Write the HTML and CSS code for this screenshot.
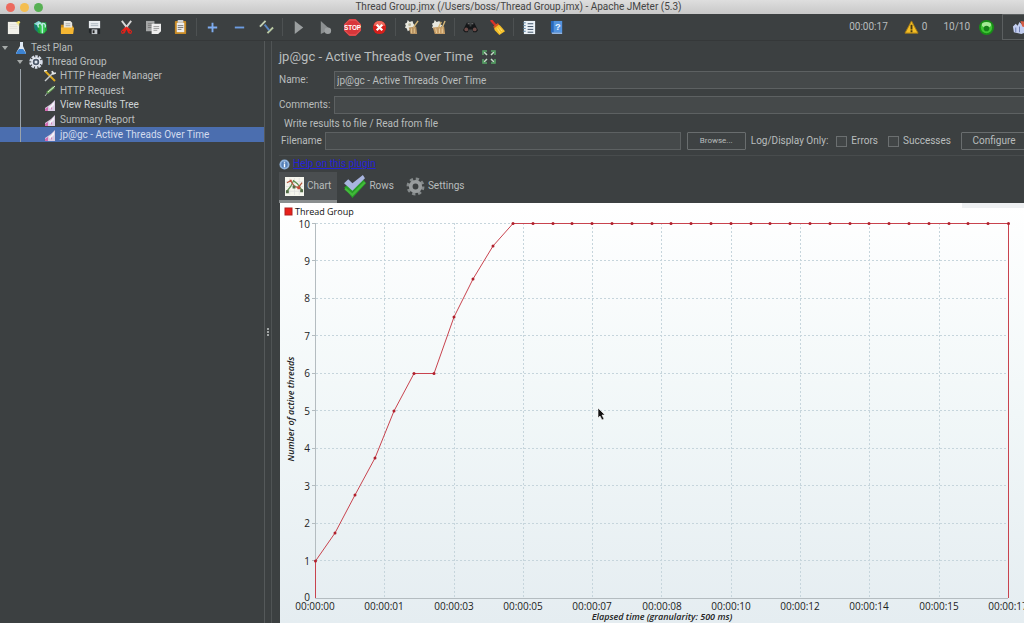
FILE: index.html
```html
<!DOCTYPE html>
<html lang="en">
<head>
  <meta charset="UTF-8" />
  <meta name="viewport" content="width=device-width, initial-scale=1.0" />
  <title>Thread Group.jmx - Apache JMeter (5.3)</title>
  <link rel="stylesheet" href="styles.css">
</head>
<body>
  <header class="titlebar">
    <div class="lights"><i class="red"></i><i class="yellow"></i><i class="green"></i></div>
    <div class="window-title">Thread Group.jmx (/Users/boss/Thread Group.jmx) - Apache JMeter (5.3)</div>
  </header>

  <nav class="toolbar">
    <div class="group">
      <button aria-label="New"><svg viewBox="0 0 16 16"><path d="M2 2h12v13H2z" fill="#f2f1ea"/><path d="M4 5h8M4 7h8M4 9h8" stroke="#d9d8d0" stroke-width=".6"/><path d="M10 2h4v5z" fill="#eee6a0"/><circle cx="13.500" cy="2.500" r="1.500" fill="#f3e26b"/></svg></button>
      <button aria-label="Templates"><svg viewBox="0 0 16 16"><path d="M1 4l5-3 4 2 4-1 1 9-4 4-5-1-4-4z" fill="#1fa03c"/><path d="M1 4l5-3 3 2-4 3z" fill="#8fd3e0"/><path d="M1 5l4 1v7l-3-3z" fill="#167a78"/><path d="M6 6l7-2v9l-5 1z" fill="#35c84f"/><path d="M10 3v11M6 8c-2-4 1-6 3-3 3-3 5 0 4 3" fill="none" stroke="#b5ebe0" stroke-width="1.500"/></svg></button>
      <button aria-label="Open"><svg viewBox="0 0 16 16"><path d="M1 5h5l1 1h7v8H1z" fill="#c98a18"/><path d="M4 1h7l2 2v6H4z" fill="#e8e6df"/><path d="M6 4h5M6 6h5" stroke="#aaa"/><path d="M1 8h14l-1 7H1z" fill="#f5b632"/></svg></button>
      <button aria-label="Save"><svg viewBox="0 0 16 16"><path d="M2 1h12v8H2z" fill="#e9edf0"/><path d="M4 4h8M4 6h8" stroke="#a9b4bd"/><path d="M2 9h12v6H4l-2-2z" fill="#23272a"/><path d="M5 10h6v5H5z" fill="#c7ccd0"/><path d="M6 11h2v3H6z" fill="#222"/></svg></button>
    </div>
    <div class="group cut">
      <button aria-label="Cut"><svg viewBox="0 0 16 16"><path d="M3 1l7 9M13 1L6 10" stroke="#d8d8d8" stroke-width="2"/><path d="M8 7l-3 2-3 3 1 3 3-1 2-4 2 4 3 1 1-3-3-3z" fill="#e32119"/><circle cx="4" cy="12.500" r=".8" fill="#3c4041"/><circle cx="12" cy="12.500" r=".8" fill="#3c4041"/></svg></button>
      <button aria-label="Copy"><svg viewBox="0 0 16 16"><path d="M0 1h9v11H0z" fill="#a5a7a7"/><path d="M2 4h5M2 6h5M2 8h4" stroke="#777"/><path d="M6 4h10v8l-3 3H6z" fill="#eee"/><path d="M8 7h6M8 9h6M8 11h4" stroke="#999"/></svg></button>
      <button aria-label="Paste"><svg viewBox="0 0 16 16"><rect x="2" y="1" width="12" height="14" rx="1" fill="#c98b25"/><path d="M4 3h8v10H4z" fill="#eee"/><path d="M5 0h6v3H5z" fill="#d2d2d2"/><path d="M5 6h6M5 8h6M5 10h4" stroke="#777"/></svg></button>
    </div>
    <span class="sep"></span>
    <div class="group">
      <button aria-label="Expand all"><svg viewBox="0 0 16 16"><path d="M8 3v10M3 8h10" stroke="#7eacf0" stroke-width="2"/></svg></button>
      <button aria-label="Collapse all"><svg viewBox="0 0 16 16"><path d="M3 8h10" stroke="#6d9ce2" stroke-width="2"/></svg></button>
      <button aria-label="Toggle"><svg viewBox="0 0 16 16"><path d="M1 7l6-6" stroke="#c4d0b4" stroke-width="2"/><path d="M9 14l6-6" stroke="#b9c9a4" stroke-width="2"/><path d="M6 5l5 6" stroke="#5a87c2" stroke-width="2"/></svg></button>
    </div>
    <span class="sep"></span>
    <div class="group">
      <button aria-label="Start"><svg viewBox="0 0 16 16"><path d="M4 1l9 7-9 7z" fill="#9b9fa0"/></svg></button>
      <button aria-label="Start no pauses"><svg viewBox="0 0 16 16"><path d="M3 1l10 9-10 5z" fill="#8c9091"/><circle cx="10.500" cy="11.500" r="3.500" fill="#9da1a2"/></svg></button>
      <button aria-label="Stop"><svg class="big" viewBox="0 0 16 16"><path d="M5 0h6l5 5v6l-5 5H5l-5-5V5z" fill="#d9363a"/><path d="M5 1h6l4 4v6l-4 4H5l-4-4V5z" fill="none" stroke="#ef8078" stroke-width=".5"/><text x="8" y="10.500" class="stop-text">STOP</text></svg></button>
      <button aria-label="Shutdown"><svg viewBox="0 0 16 16"><circle cx="8" cy="8" r="7" fill="#d61f1b"/><path d="M2 6a6 5 0 0 1 12 0z" fill="#ef6a5e"/><path d="M5 5l6 6M11 5l-6 6" stroke="#fff" stroke-width="2.400"/></svg></button>
    </div>
    <span class="sep"></span>
    <div class="group">
      <button aria-label="Clear"><svg viewBox="0 0 16 16"><path d="M1 4l2-1 1-3 2 2 3-1 1 3 2 2-2 2v3l-3-1-3 2-1-3-2-1 1-2z" fill="#e8e8df"/><circle cx="6" cy="5" r="1.500" fill="#b9b59a"/><path d="M5 8l8-1 1 8H7z" fill="#b99463"/><path d="M10 8l5-7" stroke="#d5b577" stroke-width="1.500"/><path d="M8 9v5M11 9v5" stroke="#e0c28d"/></svg></button>
      <button aria-label="Clear all"><svg viewBox="0 0 16 16"><path d="M1 4l2-1 1-3 2 2 3-1 1 3 2 2-2 2v3l-3-1-3 2-1-3-2-1 1-2z" fill="#e8e8df"/><path d="M2 8l12-1 1 8H4z" fill="#c79d66"/><path d="M8 8l3-6M12 8l3-7" stroke="#d5b577" stroke-width="1.500"/><path d="M5 9l1 5M9 9v5M12 9v5" stroke="#ead0a0"/></svg></button>
    </div>
    <span class="sep"></span>
    <div class="group">
      <button aria-label="Search"><svg viewBox="0 0 16 16"><path d="M4 3h3v4h2V3h3l4 8-2 2h-3l-1-3H6l-1 3H2l-2-2z" fill="#151719"/><circle cx="3.500" cy="10" r="2" fill="#6d4c49"/><circle cx="12.500" cy="10" r="2" fill="#6d4c49"/><path d="M5 4h2M9 4h2" stroke="#888"/></svg></button>
      <button aria-label="Clear search"><svg viewBox="0 0 16 16"><path d="M1 0l6 7" stroke="#d8322a" stroke-width="2.500"/><path d="M4 7l4-3 3 2 5 6-6 4-5-5z" fill="#f4bf28"/><path d="M4 8l5-4" stroke="#d45520" stroke-width="2"/><path d="M8 9l3 5M10 8l3 4" stroke="#ffe276"/></svg></button>
    </div>
    <span class="sep"></span>
    <div class="group">
      <button aria-label="Function helper"><svg viewBox="0 0 16 16"><path d="M2 1h12v14H2z" fill="#eaf1f7"/><path d="M6 4h6M6 7h6M6 10h6M6 13h6" stroke="#34495f"/><path d="M1 3h3M1 6h3M1 9h3M1 12h3" stroke="#577f9f"/></svg></button>
      <button aria-label="Help"><svg viewBox="0 0 16 16"><path d="M2 1h12v14H4l-2-2z" fill="#2869bd"/><path d="M5 1h9v12H5z" fill="#5393dd"/><path d="M3 14h11" stroke="#dfeaf5"/><text x="9.500" y="11" class="help-text">?</text></svg></button>
    </div>
    <div class="status">
      <span class="time">00:00:17</span>
      <svg viewBox="0 0 16 16"><path d="M8 1l7 13H1z" fill="#f4be24" stroke="#a77d16"/><path d="M8 5v5M8 11v2" stroke="#443811" stroke-width="2"/></svg>
      <span class="errors">0</span>
      <span class="threads">10/10</span>
      <svg viewBox="0 0 16 16"><circle cx="8" cy="8" r="8" fill="#188d17"/><circle cx="8" cy="8" r="6" fill="#3fc634"/><ellipse cx="8" cy="5" rx="5" ry="3" fill="#a4ea94"/><circle cx="8" cy="9" r="3" fill="#16801a"/></svg>
      <button class="plugins" aria-label="Plugins Manager"><svg viewBox="0 0 16 16"><path d="M1 7l3-3 2 2 2-4 3 3 4-1v9l-5 2-8-2z" fill="#c3cef0"/><path d="M9 1l6 1v6l-4-1z" fill="#d45b45"/><path d="M4 8v5M8 7v6" stroke="#6977ad"/></svg></button>
    </div>
  </nav>

  <div class="workspace">
    <aside class="tree">
      <div class="node root"><i class="arrow"></i><svg viewBox="0 0 12 12"><path d="M5 0h3v4l3 7q0 1-1 1H2q-1 0-1-1l4-7z" fill="#dfe9f4"/><path d="M4 7h4l3 4q0 1-1 1H2q-1 0-1-1z" fill="#3c83d2"/></svg>Test Plan</div>
      <div class="node thread"><i class="arrow"></i><svg viewBox="0 0 14 14"><circle cx="7" cy="7" r="5.500" fill="none" stroke="#d8deea" stroke-width="2.500" stroke-dasharray="2.500 1"/><circle cx="7" cy="7" r="4" fill="#4d5969" stroke="#edf1f8" stroke-width="1.500"/><circle cx="7" cy="7" r="1.500" fill="#dfe6f0"/></svg>Thread Group</div>
      <ul class="children">
        <li class="node"><svg viewBox="0 0 12 12"><path d="M1 1l10 10" stroke="#dda91f" stroke-width="2"/><path d="M1 11l9-9" stroke="#c7cccf" stroke-width="1.500"/><path d="M0 1l3-1M8 1l1 3 3-1" stroke="#e5e8e8" stroke-width="1.500" fill="none"/></svg>HTTP Header Manager</li>
        <li class="node"><svg viewBox="0 0 12 12"><path d="M1 11l3-4" stroke="#aeb3b3"/><path d="M3 8l7-6" stroke="#66a453" stroke-width="2.500"/><path d="M4 7l7-6" stroke="#e2ead9"/></svg>HTTP Request</li>
        <li class="node lit"><svg viewBox="0 0 12 12"><use href="#report"/></svg>View Results Tree</li>
        <li class="node"><svg viewBox="0 0 12 12"><use href="#report"/></svg>Summary Report</li>
        <li class="node selected"><svg viewBox="0 0 12 12"><use href="#report"/></svg>jp@gc - Active Threads Over Time</li>
      </ul>
    </aside>

    <div class="splitter"><i></i><i></i><i></i></div>

    <main class="panel">
      <h1>jp@gc - Active Threads Over Time
        <svg viewBox="0 0 14 14"><path d="M2 2l3 3M12 2L9 5M2 12l3-3M12 12L9 9" stroke="#c2dcc6" stroke-width="1.500"/><path d="M1 5V1h4M9 1h4v4M1 9v4h4M9 13h4V9" fill="none" stroke="#56a765" stroke-width="1.500"/></svg>
      </h1>
      <div class="fields">
        <div class="row">
          <label for="name">Name:</label>
          <input type="text" id="name" value="jp@gc - Active Threads Over Time">
        </div>
        <div class="row">
          <label for="comments">Comments:</label>
          <input type="text" id="comments">
        </div>
      </div>
      <section class="results">
        <div class="legend">Write results to file / Read from file</div>
        <div class="file-row">
          <label for="filename">Filename</label>
          <input type="text" id="filename">
          <button class="browse">Browse...</button>
          <span class="only">Log/Display Only:</span>
          <label class="check"><input type="checkbox">Errors</label>
          <label class="check"><input type="checkbox">Successes</label>
          <button class="configure">Configure</button>
        </div>
      </section>
      <div class="help">
        <svg viewBox="0 0 12 12"><circle cx="6" cy="6" r="5.500" fill="#8fb2dc"/><circle cx="6" cy="6" r="3.500" fill="#5580b8"/><path d="M6 5v4M6 3v1" stroke="#fff" stroke-width="1.500"/></svg>
        <a href="#help">Help on this plugin</a>
      </div>
      <div class="tabs" role="tablist">
        <button class="tab active" role="tab" aria-selected="true"><svg viewBox="0 0 20 20"><path d="M0 0h20v20H0z" fill="#f6f6ee"/><path d="M1 5h18M1 10h18M1 15h18M5 1v18M10 1v18M15 1v18" stroke="#ddd" stroke-width=".7"/><path d="M2 15l4-5 3-6 4 3 5 7" fill="none" stroke="#5f8d4e" stroke-width="1.300"/><path d="M2 6l4-2 4 6 4 1 4-5" fill="none" stroke="#b3573f" stroke-width="1.300"/><path d="M1 14h3v3H1zM8 9h3v3H8zM16 13h3v3h-3z" fill="#526c47"/><path d="M5 3h2v2H5zM13 10h3v3h-3z" fill="#c34a38"/></svg>Chart</button>
        <button class="tab rows" role="tab"><svg viewBox="0 0 22 22"><path d="M1 12l4-3 4 4 10-9 3 4L9 22z" fill="#279c27"/><path d="M2 13l7 6L21 7" fill="none" stroke="#42b93a" stroke-width="2"/><path d="M1 8l4-4 4 4L19 0l2 3L9 15z" fill="#a9b5df"/></svg>Rows</button>
        <button class="tab" role="tab"><svg viewBox="0 0 18 18"><circle cx="9" cy="9" r="7" fill="none" stroke="#858a8b" stroke-width="3" stroke-dasharray="3 2.500"/><circle cx="9" cy="9" r="4.500" fill="none" stroke="#989c9d" stroke-width="3.500"/></svg>Settings</button>
      </div>

      <div class="chart">
        <svg viewBox="0 0 744 420">
          <defs>
            <g id="report"><path d="M1 9l3-2 3-2 4-4v11H1z" fill="#d9cbe3"/><path d="M1 10l3-2v4H1zM6 7l2-2v6z" fill="#d26ab0"/><path d="M5 8l5-5v3l-4 4z" fill="#f4f4fa"/></g>
            <linearGradient id="sky" x1="0" y1="0" x2="0" y2="1"><stop offset="0" stop-color="#fff"/><stop offset=".5" stop-color="#f1f7f8"/><stop offset="1" stop-color="#e5edf1"/></linearGradient>
            <marker id="dot" markerUnits="userSpaceOnUse" markerWidth="4" markerHeight="4" refX="2" refY="2"><circle cx="2" cy="2" r="1.500" fill="#b0202c"/></marker>
          </defs>
          <rect width="744" height="420" fill="url(#sky)"/>
          <rect x="682" width="62" height="5" fill="#eef0f2"/>
          <rect x="5" y="5" width="7" height="7" fill="#e8201a" stroke="#b02020"/>
          <text x="15" y="12" class="series">Thread Group</text>
          <path class="grid" d="M36 20.500H728M36 57.500H728M36 95.500H728M36 132.500H728M36 170.500H728M36 207.500H728M36 245.500H728M36 282.500H728M36 320.500H728M36 357.500H728"/>
          <path class="grid" d="M104.500 20V395M174.500 20V395M243.500 20V395M312.500 20V395M381.500 20V395M451.500 20V395M520.500 20V395M589.500 20V395M659.500 20V395"/>
          <path class="axis" d="M32 20.500h3M32 57.500h3M32 95.500h3M32 132.500h3M32 170.500h3M32 207.500h3M32 245.500h3M32 282.500h3M32 320.500h3M32 357.500h3M35.500 20V395.500H728"/>
          <g class="y-labels">
            <text x="30" y="25">10</text><text x="30" y="62">9</text><text x="30" y="99">8</text><text x="30" y="137">7</text>
            <text x="30" y="174">6</text><text x="30" y="212">5</text><text x="30" y="249">4</text><text x="30" y="287">3</text>
            <text x="30" y="324">2</text><text x="30" y="362">1</text><text x="30" y="398">0</text>
          </g>
          <g class="x-labels">
            <text x="35" y="407">00:00:00</text><text x="104" y="407">00:00:01</text><text x="174" y="407">00:00:03</text><text x="243" y="407">00:00:05</text>
            <text x="312" y="407">00:00:07</text><text x="382" y="407">00:00:08</text><text x="451" y="407">00:00:10</text><text x="520" y="407">00:00:12</text>
            <text x="589" y="407">00:00:14</text><text x="659" y="407">00:00:15</text><text x="728" y="407">00:00:17</text>
          </g>
          <text class="axis-title" x="382" y="417">Elapsed time (granularity: 500 ms)</text>
          <text class="axis-title" transform="translate(14 206) rotate(-90)">Number of active threads</text>
          <path class="line" d="M35.500 395V358M728.500 20V395"/>
          <polyline class="line dots" points="35.500,358 55,330 75,292 95,255 114,208 134,170.500 154,170.500 174,114 193,76 213,43 233,20.500 253,20.500 273,20.500 292,20.500 312,20.500 332,20.500 352,20.500 372,20.500 391,20.500 411,20.500 431,20.500 451,20.500 471,20.500 490,20.500 510,20.500 530,20.500 550,20.500 570,20.500 589,20.500 609,20.500 629,20.500 649,20.500 669,20.500 688,20.500 708,20.500 728.500,20.500"/>
          <path d="M318 205v10l2-2 2 4 2-1-2-4h3z" fill="#111" stroke="#fff" stroke-width=".6"/>
        </svg>
      </div>
    </main>
  </div>
</body>
</html>
```
FILE: styles.css
```css
* {
  box-sizing: border-box;
}

body {
  margin: 0;
  min-height: 100vh;
  display: flex;
  flex-direction: column;
  overflow: hidden;
  background: #3c4041;
  color: #b9bdbd;
  font-family: Roboto, "Liberation Sans", sans-serif;
  font-size: 10px;
  line-height: 14px;
}

button, input {
  font: inherit;
  color: inherit;
  margin: 0;
}

svg {
  display: block;
  flex: none;
}

/* title bar */
.titlebar {
  display: flex;
  align-items: center;
  height: 14px;
  padding-left: 6px;
  background: linear-gradient(#dedede, #c8c8c8);
  color: #444;
}

.lights {
  display: flex;
  gap: 5px;
}

.lights i {
  width: 9px;
  height: 9px;
  border-radius: 50%;
}

.red { background: #ec6a5e; }
.yellow { background: #f4be50; }
.green { background: #57b053; }

.window-title {
  flex: 1;
  text-align: center;
  line-height: 12px;
  padding-right: 30px;
}

/* toolbar */
.toolbar {
  display: flex;
  align-items: center;
  height: 27px;
  border-bottom: 1px solid #353839;
}

.group {
  display: flex;
}

.group.cut {
  margin-left: 5px;
}

.group button {
  width: 27px;
  height: 24px;
  padding: 0;
  border: none;
  background: transparent;
  display: flex;
  align-items: center;
  justify-content: center;
}

.group svg, .status svg {
  width: 15px;
  height: 15px;
}

.group .big {
  width: 17px;
  height: 17px;
}

.stop-text {
  font: bold 6px "Liberation Sans", sans-serif;
  fill: #fff;
  text-anchor: middle;
}

.help-text {
  font: bold 10px "Liberation Sans", sans-serif;
  fill: #e8f2ff;
  text-anchor: middle;
}

.sep {
  width: 1px;
  height: 18px;
  margin: 0 2px;
  background: #4d5152;
}

.status {
  display: flex;
  align-items: center;
  margin-left: auto;
  margin-right: -12px;
}

.time { margin-right: 16px; }
.errors { margin: 0 16px 0 3px; }
.threads { margin-right: 9px; }

.plugins {
  width: 34px;
  height: 26px;
  margin-left: 8px;
  padding: 0;
  border: 1px solid #5b5f60;
  background: transparent;
  display: flex;
  align-items: center;
  justify-content: center;
}

/* tree */
.workspace {
  flex: 1;
  display: flex;
}

.tree {
  width: 265px;
  flex: none;
  border-right: 1px solid #55595a;
}

.node {
  display: flex;
  align-items: center;
  white-space: nowrap;
  height: 14px;
}

.node svg {
  width: 12px;
  height: 12px;
  margin-right: 4px;
}

.root { padding-left: 2px; }
.root svg { margin-left: 7px; }
.thread { padding-left: 17px; }

.thread svg {
  width: 14px;
  height: 14px;
  margin: 0 3px 0 6px;
}

.arrow {
  border: 3px solid transparent;
  border-top: 4px solid #a6aaa9;
  border-bottom: none;
}

.children {
  position: relative;
  display: grid;
  grid-auto-rows: 1fr;
  height: 73px;
  margin: 0;
  padding: 0;
  list-style: none;
}

.children::after {
  content: "";
  position: absolute;
  left: 20px;
  top: 0;
  bottom: 0;
  width: 1px;
  background: #9ba3aa;
}

.children .node {
  height: auto;
  padding-left: 44px;
}

.lit { color: #cdd3d5; }

.selected {
  background: #4b6eaf;
  color: #d3dcee;
}

.splitter {
  width: 7px;
  flex: none;
  display: flex;
  flex-direction: column;
  align-items: center;
  justify-content: center;
  gap: 1px;
  border-right: 1px solid #505455;
}

.splitter i {
  width: 2px;
  height: 2px;
  background: #a0a4a4;
}

/* main panel */
.panel {
  flex: 1;
  min-width: 0;
  padding-left: 7px;
  overflow: hidden;
}

h1 {
  display: flex;
  align-items: center;
  gap: 9px;
  margin: 0;
  padding: 8px 0 6px;
  font-size: 13px;
  font-weight: normal;
  line-height: 16px;
}

h1 svg {
  width: 14px;
  height: 14px;
}

input[type="text"] {
  min-width: 0;
  flex: 1;
  height: 18px;
  padding: 0 2px;
  border: 1px solid #5d6162;
  background: #45494a;
}

.fields {
  display: grid;
  gap: 7px;
  margin: 0 -3px 3px 0;
}

.row {
  display: flex;
  align-items: center;
}

.row label {
  width: 55px;
}

.results {
  padding: 0 0 5px 2px;
  border-bottom: 1px solid #484c4d;
}

.legend {
  padding-left: 3px;
}

.file-row {
  display: flex;
  align-items: center;
  margin-top: 1px;
  margin-right: -3px;
  white-space: nowrap;
}

.file-row > label:first-child {
  width: 44px;
}

.browse, .configure {
  height: 18px;
  padding: 0;
  border: 1px solid #696d6e;
  border-radius: 1px;
  background: #3e4243;
}

.browse {
  width: 59px;
  margin: 0 5px 0 6px;
  font-size: 8px;
}

.configure {
  width: 66px;
}

.only {
  margin-right: 8px;
}

.check {
  display: flex;
  align-items: center;
  gap: 4px;
  margin-right: 10px;
}

.check input {
  appearance: none;
  width: 11px;
  height: 11px;
  border: 1px solid #6b6f70;
  background: #414546;
}

.help {
  display: flex;
  align-items: center;
  gap: 3px;
  padding: 1px 0;
}

.help svg {
  width: 11px;
  height: 11px;
}

.help a {
  color: #2421d8;
}

.tabs {
  display: flex;
}

.tab {
  display: flex;
  align-items: center;
  gap: 3px;
  height: 31px;
  padding: 0 6px;
  border: none;
  border-bottom: 3px solid transparent;
  background: transparent;
}

.tab.active {
  background: #4a4e50;
  border-bottom-color: #8a8e8f;
}

.tab svg {
  width: 19px;
  height: 19px;
}

.tab.rows svg {
  width: 23px;
  height: 23px;
}

/* chart */
.chart {
  margin-left: 1px;
}

.chart svg {
  width: 100%;
  height: auto;
}

.chart text {
  font-family: "Open Sans", "Noto Sans", sans-serif;
  font-size: 10px;
  fill: #222;
}

.chart .series {
  font-size: 9px;
  fill: #111;
}

.y-labels text {
  text-anchor: end;
}

.x-labels text {
  text-anchor: middle;
}

.chart .axis-title {
  font-size: 9px;
  font-style: italic;
  font-weight: 600;
  text-anchor: middle;
}

.grid {
  fill: none;
  stroke: #c6d5dc;
  stroke-dasharray: 2 2;
}

.axis {
  fill: none;
  stroke: #b4bcc0;
}

.line {
  fill: none;
  stroke: #c8434e;
}

.dots {
  marker: url(#dot);
}
```
